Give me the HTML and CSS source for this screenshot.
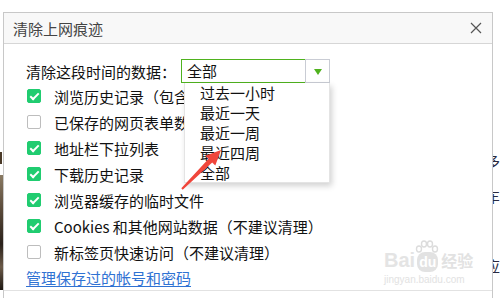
FILE: index.html
```html
<!DOCTYPE html>
<html lang="zh-CN">
<head>
<meta charset="utf-8">
<title>清除上网痕迹</title>
<link rel="stylesheet" href="styles.css">
</head>
<body>
<div class="photo"></div>
<div class="photo-mark"></div>
<div class="side-text">
  <span>多</span><span>车</span><span>1</span><span>应</span>
</div>

<div class="dialog">
  <div class="titlebar">
    <span class="title">清除上网痕迹</span>
    <svg class="close" width="12" height="12" viewBox="0 0 12 12"><path d="M1 1L11 11M11 1L1 11" stroke="#555" stroke-width="1.2" fill="none"/></svg>
  </div>
  <div class="content">
    <div class="range-row">
      <span class="range-label">清除这段时间的数据：</span>
      <div class="select">
        <div class="select-value">全部</div>
        <div class="select-btn"><span class="tri"></span></div>
      </div>
    </div>
    <div class="row"><span class="cb on"></span><span class="lbl under">浏览历史记录（包含访问过的网址）</span></div>
    <div class="row"><span class="cb"></span><span class="lbl under">已保存的网页表单数据</span></div>
    <div class="row"><span class="cb on"></span><span class="lbl">地址栏下拉列表</span></div>
    <div class="row"><span class="cb on"></span><span class="lbl">下载历史记录</span></div>
    <div class="row"><span class="cb on"></span><span class="lbl">浏览器缓存的临时文件</span></div>
    <div class="row"><span class="cb on"></span><span class="lbl">Cookies 和其他网站数据（不建议清理）</span></div>
    <div class="row"><span class="cb"></span><span class="lbl">新标签页快速访问（不建议清理）</span></div>
    <div class="link-row"><a class="link" href="#">管理保存过的帐号和密码</a></div>
  </div>
  <div class="footer"></div>
</div>

<ul class="dropdown">
  <li>过去一小时</li>
  <li>最近一天</li>
  <li>最近一周</li>
  <li>最近四周</li>
  <li>全部</li>
</ul>

<div class="watermark">
  <svg class="paw" width="26" height="22" viewBox="0 0 26 22">
    <g fill="none" stroke="#dcdcdc" stroke-width="1.4">
      <ellipse cx="5" cy="9" rx="2.5" ry="3"/>
      <ellipse cx="10" cy="4" rx="2.5" ry="3"/>
      <ellipse cx="16" cy="4" rx="2.5" ry="3"/>
      <ellipse cx="21" cy="9" rx="2.5" ry="3"/>
    </g>
  </svg>
  <div class="wm-main"><span class="wm-bai">Bai</span><span class="wm-du">du</span><span class="wm-cn">经验</span></div>
  <div class="wm-url">jingyan.baidu.com</div>
</div>

<svg class="arrow" width="55" height="55" viewBox="0 0 55 55">
  <polygon fill="#f0463b" points="6.3,48.3 33.6,18.8 30.4,15.7 46,10 40.3,25.5 37.2,22.4 7.7,49.7"/>
</svg>
</body>
</html>
```
FILE: styles.css
```css
html, body {
  margin: 0;
  padding: 0;
}
body {
  position: relative;
  width: 502px;
  height: 299px;
  overflow: hidden;
  background: #ffffff;
  font-family: "Noto Sans CJK SC", "Noto Sans", sans-serif;
  color: #111;
}
.photo {
  position: absolute;
  left: 0;
  top: 175px;
  width: 4px;
  height: 115px;
  background: linear-gradient(#8a7a63, #5a4a3a 30%, #2a211b 60%, #6b5a48 80%, #1d1712);
}
.photo-mark {
  position: absolute;
  left: 0;
  top: 152px;
  width: 2px;
  height: 12px;
  background: #4a3a28;
}
.side-text {
  position: absolute;
  left: 485px;
  top: 150px;
  display: flex;
  flex-direction: column;
  gap: 14px;
  font-size: 15px;
  line-height: 21px;
  color: #2a2a40;
}
.dialog {
  position: relative;
  z-index: 1;
  margin: 12px 0 0 3px;
  width: 488px;
  height: 285px;
  border: 1px solid #c8c8c8;
  border-bottom: none;
  background: #fff;
}
.titlebar {
  height: 30px;
  border-bottom: 1px solid #d6d6d6;
  background: #f8f8f8;
  display: flex;
  align-items: center;
  justify-content: space-between;
  padding: 0 9px 0 9px;
}
.title {
  font-size: 15px;
  color: #444;
}
.close {
  margin-right: 1px;
}
.content {
  padding: 15px 0 0 22px;
}
.range-row {
  display: flex;
  align-items: center;
  height: 24px;
}
.range-label {
  width: 155px;
  font-size: 15px;
}
.select {
  display: flex;
  height: 24px;
  box-sizing: border-box;
}
.select-value {
  width: 124px;
  box-sizing: border-box;
  border: 1px solid #4fb21e;
  border-right: none;
  padding-left: 5px;
  font-size: 15px;
  line-height: 22px;
}
.select-btn {
  width: 25px;
  box-sizing: border-box;
  border: 1px solid #c9ccd4;
  display: flex;
  align-items: center;
  justify-content: center;
}
.tri {
  width: 0;
  height: 0;
  border-left: 4px solid transparent;
  border-right: 4px solid transparent;
  border-top: 6px solid #4fb21e;
  margin-top: 2px;
}
.row {
  display: flex;
  align-items: center;
  height: 26px;
}
.row:first-of-type {
  margin-top: 1px;
}
.cb {
  width: 14px;
  height: 14px;
  box-sizing: border-box;
  margin-left: 1px;
  border: 1px solid #bdbdbd;
  border-radius: 2px;
  background: #fff;
  position: relative;
  flex: none;
}
.cb.on {
  border-color: #20cc70;
  background: #20cc70;
}
.cb.on::after {
  content: "";
  position: absolute;
  left: 4px;
  top: 1px;
  width: 3px;
  height: 7px;
  border-right: 2px solid #fff;
  border-bottom: 2px solid #fff;
  transform: rotate(45deg);
}
.lbl {
  margin-left: 13px;
  font-size: 15px;
  white-space: nowrap;
}
.lbl.under {
  max-width: 130px;
  overflow: hidden;
}
.link-row {
  height: 24px;
  display: flex;
  align-items: center;
}
.link {
  font-size: 15px;
  color: #2f72d3;
  text-decoration: underline;
  text-underline-offset: 2px;
}
.footer {
  position: absolute;
  left: 0;
  right: 0;
  top: 277px;
  border-top: 1px solid #e2e2e2;
}
.dropdown {
  position: absolute;
  z-index: 2;
  left: 184px;
  top: 83px;
  width: 146px;
  height: 100px;
  margin: 0;
  padding: 0;
  list-style: none;
  box-sizing: border-box;
  background: #fff;
  border: 1px solid #e4e4e4;
  border-top: none;
  box-shadow: 2px 3px 6px rgba(0, 0, 0, 0.18);
}
.dropdown li {
  height: 20px;
  line-height: 20px;
  padding-left: 15px;
  font-size: 15px;
  color: #111;
}
.watermark {
  position: absolute;
  z-index: 3;
  left: 384px;
  top: 243px;
  width: 92px;
  color: #e0e0e0;
}
.paw {
  position: absolute;
  left: 30px;
  top: -3px;
}
.wm-main {
  display: flex;
  align-items: baseline;
  margin-top: 7px;
  font-family: "Liberation Sans", sans-serif;
  font-weight: bold;
  line-height: 20px;
}
.wm-bai {
  font-size: 20px;
  color: #e4e4e4;
}
.wm-du {
  font-size: 14px;
  color: #fff;
  background: #e2e2e2;
  border-radius: 8px;
  padding: 0 2px;
  margin: 0 3px 0 2px;
}
.wm-cn {
  font-family: "Noto Sans CJK SC", sans-serif;
  font-size: 16px;
  color: #e2e2e2;
}
.wm-url {
  font-family: "Liberation Sans", sans-serif;
  font-size: 10px;
  line-height: 12px;
  color: #e2e2e2;
  margin-top: 2px;
}
.arrow {
  position: absolute;
  z-index: 4;
  left: 175px;
  top: 140px;
}
```
